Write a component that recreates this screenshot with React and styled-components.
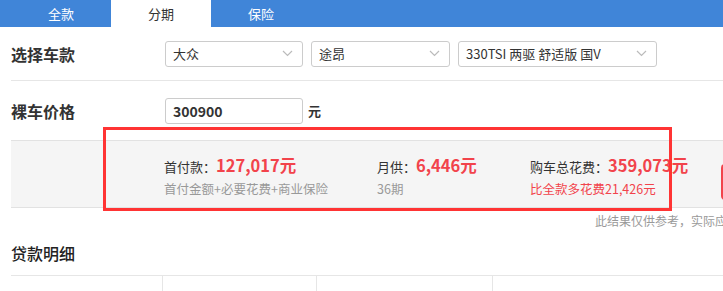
import React from 'react'
import styled, { createGlobalStyle } from 'styled-components'

const GlobalStyle = createGlobalStyle`
  html, body {
    margin: 0;
    padding: 0;
    background: #fff;
    overflow: hidden;
  }
  body {
    font-family: "Microsoft YaHei", "Noto Sans CJK SC", "Noto Sans", sans-serif;
    color: #333;
  }
`

const Page = styled.div`
  position: relative;
  width: 900px;
  height: 291px;
`

const TabBar = styled.div`
  display: flex;
  height: 27px;
  padding-left: 11px;
  background: #4085d8;
`

const Tab = styled.div`
  width: 100px;
  line-height: 27px;
  text-align: center;
  font-size: 13px;
  color: ${p => (p.active ? '#333' : '#fff')};
  background: ${p => (p.active ? '#fff' : 'transparent')};
`

const Body = styled.div`
  padding-left: 11px;
`

const Row = styled.div`
  display: flex;
  align-items: center;
  height: ${p => p.h}px;
  border-bottom: ${p => (p.line ? '1px solid #e6e6e6' : 'none')};
`

const Label = styled.div`
  width: 154px;
  font-size: 16px;
  font-weight: bold;
  color: #333;
`

const SelectGroup = styled.div`
  display: flex;
  gap: 8px;
`

const SelectBox = styled.div`
  display: flex;
  align-items: center;
  justify-content: space-between;
  box-sizing: border-box;
  width: ${p => p.w}px;
  height: 26px;
  padding: 0 9px 0 7px;
  border: 1px solid #ccc;
  border-radius: 3px;
  font-size: 13px;
  color: #333;
  background: #fff;
`

const PriceInput = styled.div`
  box-sizing: border-box;
  width: 138px;
  height: 26px;
  padding-left: 7px;
  line-height: 24px;
  border: 1px solid #ccc;
  border-radius: 3px;
  font-size: 14px;
  font-weight: bold;
  color: #333;
`

const Unit = styled.span`
  margin-left: 5px;
  font-size: 13px;
  font-weight: bold;
`

const Band = styled.div`
  display: flex;
  box-sizing: border-box;
  height: 68px;
  padding: 12px 0 0 153px;
  background: #f5f5f5;
  border-top: 1px solid #e2e2e2;
  border-bottom: 1px solid #e2e2e2;
`

const Item = styled.div`
  width: ${p => p.w}px;
`

const ItemMain = styled.div`
  display: flex;
  align-items: baseline;
  height: 24px;
  font-size: 13px;
  color: #333;
`

const Value = styled.span`
  font-size: 16.5px;
  font-weight: bold;
  color: #f2434b;
`

const ItemSub = styled.div`
  margin-top: 2px;
  font-size: 12.5px;
  color: ${p => (p.red ? '#f2434b' : '#999')};
`

const ApplyButton = styled.div`
  width: 110px;
  height: 36px;
  margin-top: 11px;
  border-radius: 4px;
  background: #f2434b;
`

const Note = styled.div`
  height: 26px;
  padding-left: 584px;
  line-height: 26px;
  font-size: 12px;
  color: #999;
  white-space: nowrap;
`

const SectionTitle = styled.div`
  height: 41px;
  line-height: 38px;
  font-size: 16px;
  font-weight: 500;
  color: #222;
  border-bottom: 1px solid #e6e6e6;
`

const Table = styled.div`
  display: flex;
  height: 40px;
`

const Cell = styled.div`
  box-sizing: border-box;
  width: ${p => p.w}px;
  padding: 13px 0 0 ${p => p.pl || 0}px;
  border-right: 1px solid #e6e6e6;
  display: flex;
  gap: 28px;
  font-size: 12px;
  color: #999;
`

const Annotation = styled.div`
  position: absolute;
  left: 103px;
  top: 127px;
  width: 569px;
  height: 84px;
  box-sizing: border-box;
  border: 3px solid #ff3434;
`

const Chevron = () => (
  <svg width="11" height="7" viewBox="0 0 11 7">
    <polyline points="1,1 5.5,5.5 10,1" fill="none" stroke="#bbb" strokeWidth="1.2" />
  </svg>
)

export default function App() {
  return (
    <Page>
      <GlobalStyle />
      <TabBar>
        <Tab>全款</Tab>
        <Tab active>分期</Tab>
        <Tab>保险</Tab>
      </TabBar>
      <Body>
        <Row h={53} line>
          <Label>选择车款</Label>
          <SelectGroup>
            <SelectBox w={138}>大众<Chevron /></SelectBox>
            <SelectBox w={139}>途昂<Chevron /></SelectBox>
            <SelectBox w={199}>330TSI 两驱 舒适版 国V<Chevron /></SelectBox>
          </SelectGroup>
        </Row>
        <Row h={59}>
          <Label>裸车价格</Label>
          <PriceInput>300900</PriceInput>
          <Unit>元</Unit>
        </Row>
        <Band>
          <Item w={213}>
            <ItemMain>首付款：<Value>127,017元</Value></ItemMain>
            <ItemSub>首付金额+必要花费+商业保险</ItemSub>
          </Item>
          <Item w={153}>
            <ItemMain>月供：<Value>6,446元</Value></ItemMain>
            <ItemSub>36期</ItemSub>
          </Item>
          <Item w={191}>
            <ItemMain>购车总花费：<Value>359,073元</Value></ItemMain>
            <ItemSub red>比全款多花费21,426元</ItemSub>
          </Item>
          <ApplyButton />
        </Band>
        <Note>此结果仅供参考，实际应缴费用以当地为准</Note>
        <SectionTitle>贷款明细</SectionTitle>
        <Table>
          <Cell w={152} />
          <Cell w={154} />
          <Cell w={176} pl={26}>
            <span>30%</span>
            <span>40%</span>
            <span>50%</span>
          </Cell>
        </Table>
      </Body>
      <Annotation />
    </Page>
  )
}
